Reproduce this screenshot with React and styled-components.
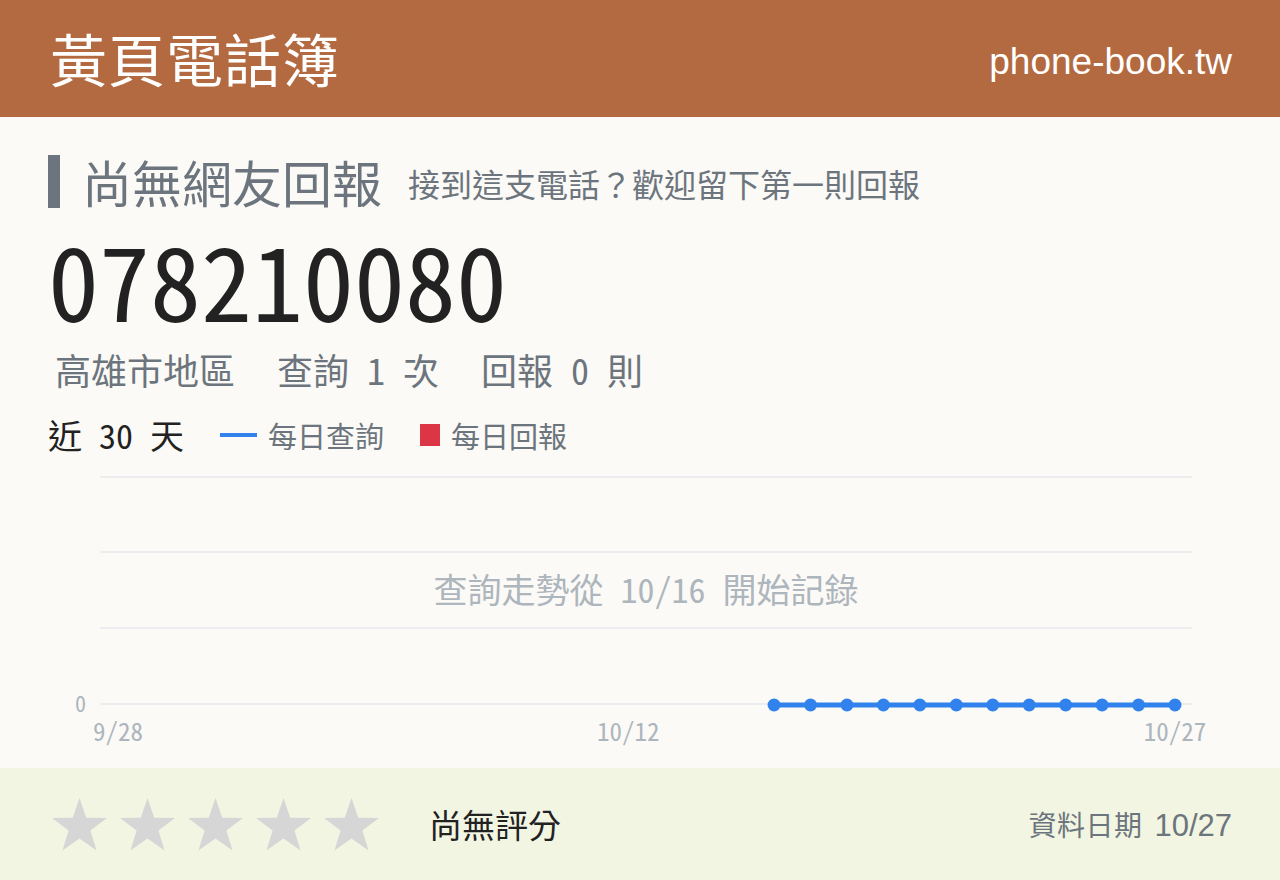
import React from "react";
import styled, { createGlobalStyle } from "styled-components";

const CJK = `"Noto Sans Mono CJK TC", "Noto Sans CJK TC", "Noto Sans", sans-serif`;
const LATIN = `"Liberation Sans", Arial, "Noto Sans CJK TC", sans-serif`;

const Global = createGlobalStyle`
  html, body { margin: 0; padding: 0; background: #fbfaf6; }
  body { font-family: ${CJK}; color: #212529; }
  * { box-sizing: border-box; }
`;

const Page = styled.div`
  width: 1280px;
  height: 880px;
  display: flex;
  flex-direction: column;
  background: #fbfaf6;
  overflow: hidden;
`;

const Header = styled.header`
  height: 117px;
  flex: none;
  background: #b46a40;
  display: flex;
  align-items: center;
  justify-content: space-between;
  padding: 0 48px 0 50px;
  color: #fff;
`;

const Brand = styled.h1`
  margin: 0;
  font-family: "Noto Sans CJK TC", sans-serif;
  font-weight: 400;
  font-size: 57px;
  line-height: 1;
  letter-spacing: 1px;
  padding-bottom: 2px;
`;

const Domain = styled.span`
  font-family: ${LATIN};
  font-size: 37px;
  line-height: 1;
  padding-top: 6px;
`;

const Main = styled.main`
  flex: 1;
  padding: 38px 48px 0 48px;
  display: flex;
  flex-direction: column;
`;

const TitleRow = styled.div`
  display: flex;
  align-items: center;
  height: 53px;
  gap: 22px;
`;

const TitleBar = styled.div`
  width: 12px;
  align-self: stretch;
  background: #6c757d;
`;

const Title = styled.h2`
  margin: 0;
  font-family: "Noto Sans CJK TC", sans-serif;
  font-weight: 400;
  font-size: 50px;
  line-height: 1;
  color: #6c757d;
  padding-bottom: 2px;
`;

const Hint = styled.span`
  font-size: 32px;
  line-height: 1;
  color: #6c757d;
  margin-left: 4px;
  padding-top: 2px;
`;

const Number = styled.div`
  margin-top: 20px;
  font-size: 102px;
  line-height: 100px;
  color: #222;
`;

const Stats = styled.div`
  display: flex;
  gap: 42px;
  margin-top: 19px;
  padding-left: 7px;
  font-size: 36px;
  line-height: 44px;
  color: #6c757d;
`;

const Legend = styled.div`
  display: flex;
  align-items: center;
  margin-top: 22px;
  height: 44px;
`;

const Range = styled.span`
  font-size: 34px;
  line-height: 1;
  color: #222;
  margin-right: 36px;
`;

const LegendItem = styled.span`
  display: inline-flex;
  align-items: center;
  gap: 11px;
  margin-right: 36px;
  font-size: 29px;
  line-height: 1;
  color: #6c757d;
`;

const Swatch = styled.i`
  display: inline-block;
  width: ${(p) => (p.$kind === "line" ? "37px" : "20px")};
  height: ${(p) => (p.$kind === "line" ? "4px" : "22px")};
  background: ${(p) => p.$color};
`;

const ChartBox = styled.div`
  margin: 9px -48px 0 -48px;
  height: 290px;
  position: relative;
`;

const ChartNote = styled.div`
  position: absolute;
  left: 100px;
  width: 1092px;
  top: 103px;
  text-align: center;
  font-size: 34px;
  line-height: 40px;
  color: #adb5bd;
`;

const Footer = styled.footer`
  height: 112px;
  flex: none;
  background: #f2f5e2;
  display: flex;
  align-items: center;
  padding: 0 48px 0 52px;
`;

const Stars = styled.div`
  display: flex;
  gap: 13px;
  margin-right: 50px;
`;

const Rating = styled.span`
  font-size: 33px;
  line-height: 1;
  color: #222;
  font-family: "Noto Sans CJK TC", sans-serif;
`;

const Updated = styled.div`
  margin-left: auto;
  display: flex;
  align-items: baseline;
  gap: 12px;
  color: #6c757d;
`;

const UpdatedLabel = styled.span`
  font-family: "Noto Sans CJK TC", sans-serif;
  font-size: 28px;
  letter-spacing: 0.5px;
`;

const UpdatedDate = styled.span`
  font-family: ${LATIN};
  font-size: 31px;
`;

function starPoints(cx, cy, R, r) {
  const pts = [];
  for (let i = 0; i < 10; i++) {
    const rad = i % 2 === 0 ? R : r;
    const a = -Math.PI / 2 + (i * Math.PI) / 5;
    pts.push(`${(cx + rad * Math.cos(a)).toFixed(2)},${(cy + rad * Math.sin(a)).toFixed(2)}`);
  }
  return pts.join(" ");
}

const Star = () => (
  <svg width="55" height="53" viewBox="0 0 55 53">
    <polygon points={starPoints(27.5, 29, 29, 11.5)} fill="#d6d6d6" />
  </svg>
);

// 30 days: 9/28 .. 10/27, records start on day 18 (10/16)
const X0 = 118;
const STEP = (1175 - 118) / 29;
const gridY = [11, 86, 162, 238];

const Chart = () => {
  const pts = [];
  for (let i = 18; i < 30; i++) pts.push([X0 + i * STEP, gridY[3] + 1]);
  const path = pts.map((p, i) => `${i ? "L" : "M"}${p[0].toFixed(1)} ${p[1]}`).join(" ");
  return (
    <svg width="1280" height="290" viewBox="0 0 1280 290" style={{ display: "block" }}>
      {gridY.map((y) => (
        <line key={y} x1="100" x2="1192" y1={y} y2={y} stroke="#e7e9ec" strokeWidth="1.6" />
      ))}
      <text x="86" y={gridY[3] + 8} textAnchor="end" fontSize="22" fill="#adb5bd" fontFamily={CJK}>
        0
      </text>
      {[
        ["9/28", X0],
        ["10/12", X0 + 14 * STEP],
        ["10/27", X0 + 29 * STEP],
      ].map(([t, x]) => (
        <text key={t} x={x} y={gridY[3] + 37} textAnchor="middle" fontSize="25" fill="#adb5bd" fontFamily={CJK}>
          {t}
        </text>
      ))}
      <path d={path} stroke="#3182ec" strokeWidth="5" fill="none" />
      {pts.map(([x, y]) => (
        <circle key={x} cx={x} cy={y} r="6.5" fill="#3182ec" />
      ))}
    </svg>
  );
};

export default function App() {
  return (
    <Page>
      <Global />
      <Header>
        <Brand>黃頁電話簿</Brand>
        <Domain>phone-book.tw</Domain>
      </Header>
      <Main>
        <TitleRow>
          <TitleBar />
          <Title>尚無網友回報</Title>
          <Hint>接到這支電話？歡迎留下第一則回報</Hint>
        </TitleRow>
        <Number>078210080</Number>
        <Stats>
          <span>高雄市地區</span>
          <span>查詢 1 次</span>
          <span>回報 0 則</span>
        </Stats>
        <Legend>
          <Range>近 30 天</Range>
          <LegendItem>
            <Swatch $kind="line" $color="#3182ec" />
            每日查詢
          </LegendItem>
          <LegendItem>
            <Swatch $kind="box" $color="#dc3545" />
            每日回報
          </LegendItem>
        </Legend>
        <ChartBox>
          <Chart />
          <ChartNote>查詢走勢從 10/16 開始記錄</ChartNote>
        </ChartBox>
      </Main>
      <Footer>
        <Stars>
          {[0, 1, 2, 3, 4].map((i) => (
            <Star key={i} />
          ))}
        </Stars>
        <Rating>尚無評分</Rating>
        <Updated>
          <UpdatedLabel>資料日期</UpdatedLabel>
          <UpdatedDate>10/27</UpdatedDate>
        </Updated>
      </Footer>
    </Page>
  );
}
